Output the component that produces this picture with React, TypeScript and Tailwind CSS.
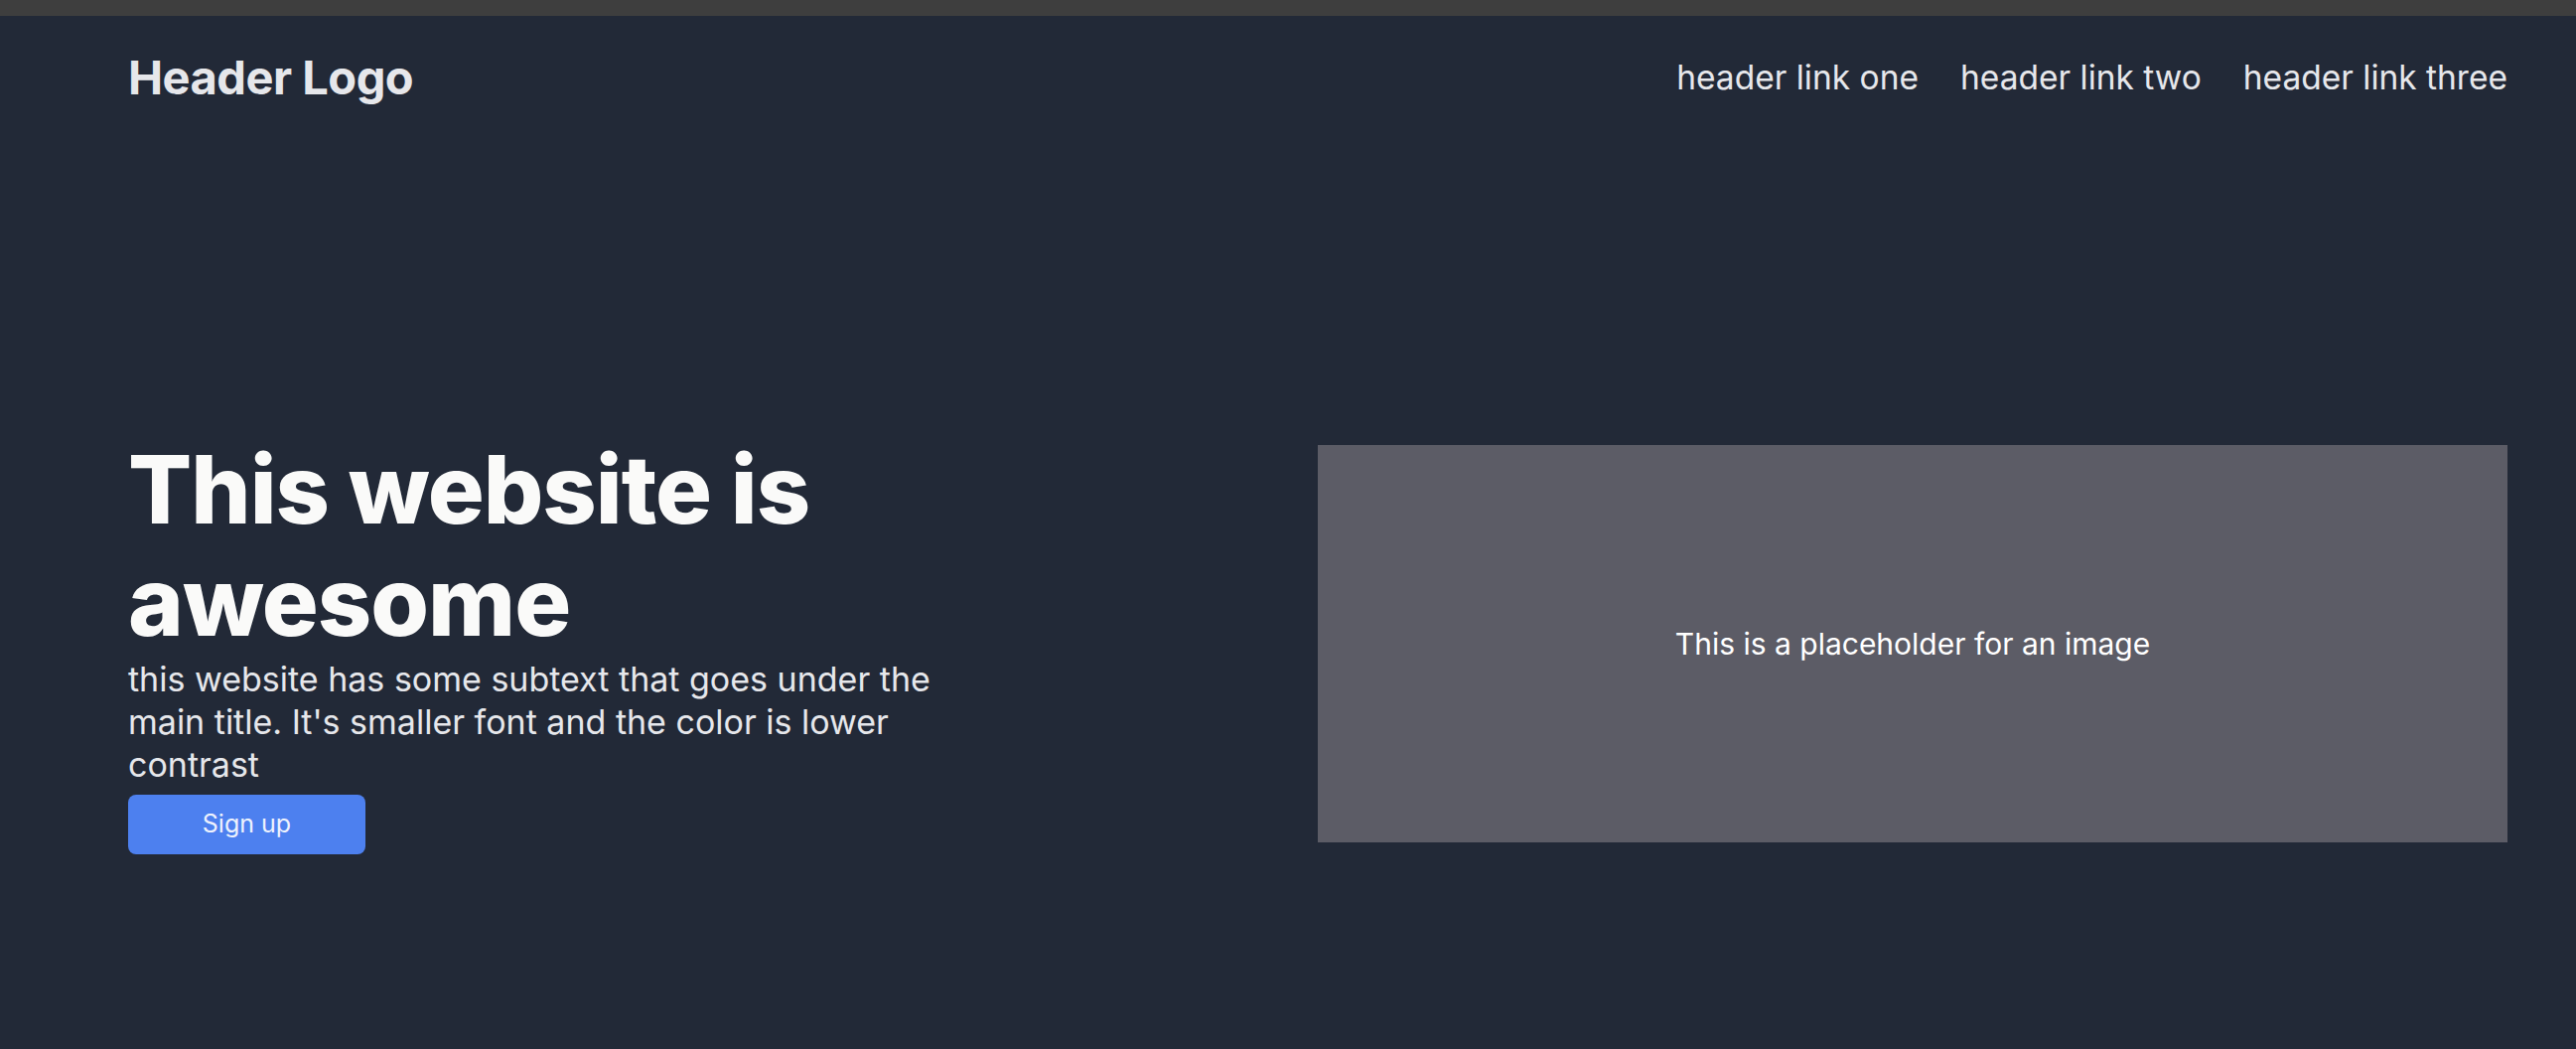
import React from 'react';

const links = ['header link one', 'header link two', 'header link three'];

const Header = () => {
  return (
    <header className="mt-[30px] flex h-[64px] items-center justify-between pl-[129px] pr-[69px]">
      <div className="text-[47px] font-bold leading-[64px] tracking-[-0.5px] text-[#e6e7eb]">Header Logo</div>
      <nav className="flex items-center gap-[42px]">
        {links.map((link) => (
          <a key={link} href="#" className="text-[33.5px] leading-[48px] text-[#e6e7eb]">
            {link}
          </a>
        ))}
      </nav>
    </header>
  );
};

const Hero = () => {
  return (
    <section className="mt-[326px] grid grid-cols-2 items-center pl-[129px] pr-[69px]">
      {/* Left: title, subtext, button */}
      <div className="flex flex-col items-start">
        <h1 className="max-w-[760px] text-[95px] font-extrabold leading-[113px] tracking-[-1px] text-[#fafaf9]">
          This website is awesome
        </h1>
        <p className="max-w-[830px] text-[34px] leading-[43px] text-[#e6e7eb]">
          this website has some subtext that goes under the main title. It's smaller font and the color is lower
          contrast
        </p>
        <button className="mt-[9px] h-[60px] w-[239px] rounded-[8px] bg-[#4d80ef] text-[25px] text-[#eef2fd]">
          Sign up
        </button>
      </div>

      {/* Right: image placeholder */}
      <div className="flex h-[400px] items-center justify-center bg-[#5c5c66]">
        <span className="text-[30px] text-white">This is a placeholder for an image</span>
      </div>
    </section>
  );
};

const App = () => {
  return (
    <div className="min-h-screen bg-[#222937] font-['Inter',sans-serif]">
      <div className="h-[16px] bg-[#3e3e3e]"></div>
      <Header />
      <Hero />
    </div>
  );
};

export default App;
